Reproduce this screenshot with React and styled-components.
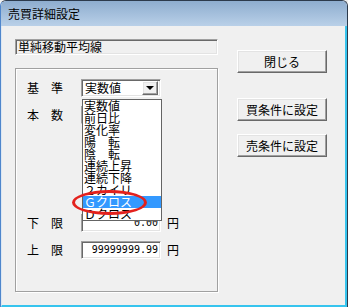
import React from 'react';
import styled, { createGlobalStyle } from 'styled-components';

const GlobalStyle = createGlobalStyle`
  html, body {
    margin: 0;
    padding: 0;
    background: #f0f0f0;
  }
  body {
    font-family: "Noto Sans CJK JP", "Noto Sans", sans-serif;
    font-size: 12px;
    color: #000;
  }
`;

const Window = styled.div`
  width: 348px;
  height: 307px;
  box-sizing: border-box;
  display: flex;
  flex-direction: column;
  border: 1px solid #2c3a4c;
  border-left-color: #4f86cc;
  border-bottom: none;
  border-radius: 6px 6px 0 0;
  overflow: hidden;
  background: #f0f0f0;
`;

const TitleBar = styled.div`
  height: 25px;
  flex: none;
  display: flex;
  align-items: center;
  padding-left: 7px;
  background: linear-gradient(#8eadcf, #b9d0e8);
  font-size: 12px;
`;

const Frame = styled.div`
  flex: 1;
  display: flex;
  gap: 19px;
  padding: 13px 0 0 13px;
  border-left: 1px solid #dce7f3;
  border-right: 2px solid #36c4ee;
  border-bottom: 2px solid #36c4ee;
`;

const LeftColumn = styled.div`
  width: 203px;
  display: flex;
  flex-direction: column;
`;

const RightColumn = styled.div`
  display: flex;
  flex-direction: column;
  margin-top: 11px;
`;

const ReadOnlyField = styled.div`
  height: 16px;
  box-sizing: border-box;
  border: 1px solid;
  border-color: #a0a0a0 #fff #fff #a0a0a0;
  box-shadow: inset 1px 1px 0 #696969, inset -1px -1px 0 #e3e3e3;
  padding-left: 2px;
  line-height: 14px;
  white-space: nowrap;
`;

const GroupBox = styled.div`
  margin-top: 13px;
  height: 224px;
  box-sizing: border-box;
  border: 1px solid #a0a0a0;
  box-shadow: inset 1px 1px 0 #fff, 1px 1px 0 #fff;
  padding: 10px 0 0 11px;
  display: flex;
  flex-direction: column;
`;

const Row = styled.div`
  display: flex;
  align-items: center;
  height: 18px;
  margin-top: ${p => p.$gap || 0}px;
`;

const Label = styled.span`
  width: 54px;
  line-height: 12px;
  white-space: pre;
`;

const sunken = `
  box-sizing: border-box;
  border: 1px solid;
  border-color: #a0a0a0 #fff #fff #a0a0a0;
  box-shadow: inset 1px 1px 0 #696969, inset -1px -1px 0 #e3e3e3;
  background: #fff;
`;

const NumberField = styled.div`
  ${sunken}
  width: 80px;
  height: 18px;
  padding-right: 2px;
  text-align: right;
  font-family: "DejaVu Sans Mono", "Liberation Mono", monospace;
  font-size: 10px;
  line-height: 16px;
`;

const Unit = styled.span`
  margin-left: 6px;
  line-height: 12px;
`;

const Combo = styled.div`
  ${sunken}
  position: relative;
  width: 80px;
  height: 18px;
  padding: 2px;
  display: flex;
  align-items: center;
  line-height: 12px;
`;

const ComboText = styled.span`
  flex: 1;
  padding-left: 1px;
`;

const DropButton = styled.span`
  width: 16px;
  height: 14px;
  box-sizing: border-box;
  border: 1px solid;
  border-color: #fff #696969 #696969 #fff;
  box-shadow: inset -1px -1px 0 #a0a0a0, inset 1px 1px 0 #e3e3e3;
  background: #f0f0f0;
  display: flex;
  align-items: center;
  justify-content: center;
`;

const Arrow = styled.span`
  width: 0;
  height: 0;
  border-left: 4px solid transparent;
  border-right: 4px solid transparent;
  border-top: 4px solid #000;
`;

const DropList = styled.ul`
  position: absolute;
  top: 19px;
  left: 0;
  width: 80px;
  box-sizing: border-box;
  margin: 0;
  padding: 0;
  list-style: none;
  border: 1px solid #646464;
  background: #fff;
  z-index: 2;
`;

const ListItem = styled.li`
  height: 12px;
  line-height: 12px;
  padding-left: 1px;
  white-space: pre;
  background: ${p => (p.$selected ? '#3399ff' : 'transparent')};
  color: ${p => (p.$selected ? '#fff' : '#000')};
`;

const Mark = styled.div`
  position: absolute;
  left: -10px;
  top: 110px;
  width: 75px;
  height: 25px;
  box-sizing: border-box;
  border: 3px solid #e3211d;
  border-radius: 50%;
  z-index: 3;
  pointer-events: none;
`;

const Button = styled.button`
  width: 90px;
  height: 23px;
  margin-top: ${p => p.$gap || 0}px;
  box-sizing: border-box;
  border: 1px solid;
  border-color: #fff #696969 #696969 #fff;
  box-shadow: inset -1px -1px 0 #a0a0a0, inset 1px 1px 0 #e3e3e3;
  background: #f0f0f0;
  font-family: inherit;
  font-size: 12px;
  color: #000;
  padding: 0;
`;

const items = [
  '実数値',
  '前日比',
  '変化率',
  '陽　転',
  '陰　転',
  '連続上昇',
  '連続下降',
  '２カイリ',
  'Ｇクロス',
  'Ｄクロス',
];

export default function App() {
  return (
    <>
      <GlobalStyle />
      <Window>
        <TitleBar>売買詳細設定</TitleBar>
        <Frame>
          <LeftColumn>
            <ReadOnlyField>単純移動平均線</ReadOnlyField>
            <GroupBox>
              <Row>
                <Label>基　準</Label>
                <Combo>
                  <ComboText>実数値</ComboText>
                  <DropButton>
                    <Arrow />
                  </DropButton>
                  <DropList>
                    {items.map(item => (
                      <ListItem key={item} $selected={item === 'Ｇクロス'}>
                        {item}
                      </ListItem>
                    ))}
                  </DropList>
                  <Mark />
                </Combo>
              </Row>
              <Row $gap={9}>
                <Label>本　数</Label>
                <NumberField />
              </Row>
              <Row $gap={90}>
                <Label>下　限</Label>
                <NumberField>0.00</NumberField>
                <Unit>円</Unit>
              </Row>
              <Row $gap={9}>
                <Label>上　限</Label>
                <NumberField>99999999.99</NumberField>
                <Unit>円</Unit>
              </Row>
            </GroupBox>
          </LeftColumn>
          <RightColumn>
            <Button>閉じる</Button>
            <Button $gap={25}>買条件に設定</Button>
            <Button $gap={13}>売条件に設定</Button>
          </RightColumn>
        </Frame>
      </Window>
    </>
  );
}
